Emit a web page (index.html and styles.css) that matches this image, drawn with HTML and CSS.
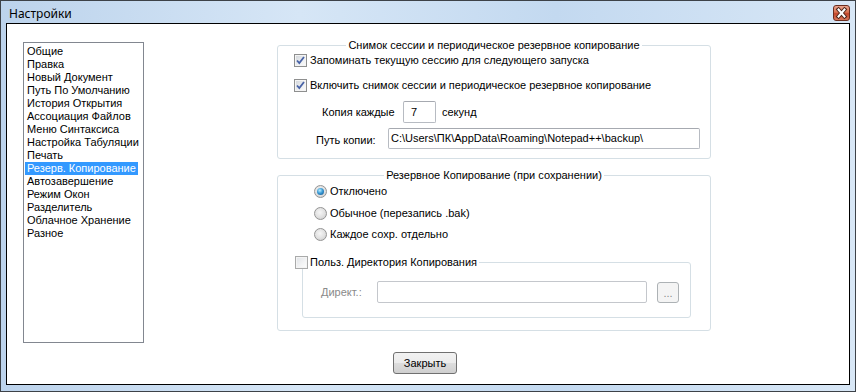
FILE: index.html
```html
<!DOCTYPE html>
<html>

<head>
    <meta charset="utf-8" />
    <title>Настройки</title>
    <link rel="stylesheet" href="styles.css">
</head>

<body>
    <div class="window">
        <div class="titlebar">
            <span class="title">Настройки</span>
            <span class="close-x">
                <svg width="15" height="14" viewBox="0 0 15 14">
                    <path d="M4.5 3.5 L10.5 10.5 M10.5 3.5 L4.5 10.5" stroke="#4a2418" stroke-width="4" stroke-linecap="square" />
                    <path d="M4.5 3.5 L10.5 10.5 M10.5 3.5 L4.5 10.5" stroke="#fff" stroke-width="2" stroke-linecap="square" />
                </svg>
            </span>
        </div>
        <div class="client">
            <div class="main">
                <ul class="cats">
                    <li>Общие</li>
                    <li>Правка</li>
                    <li>Новый Документ</li>
                    <li>Путь По Умолчанию</li>
                    <li>История Открытия</li>
                    <li>Ассоциация Файлов</li>
                    <li>Меню Синтаксиса</li>
                    <li>Настройка Табуляции</li>
                    <li>Печать</li>
                    <li class="selected">Резерв. Копирование</li>
                    <li>Автозавершение</li>
                    <li>Режим Окон</li>
                    <li>Разделитель</li>
                    <li>Облачное Хранение</li>
                    <li>Разное</li>
                </ul>
                <div class="panel">
                    <fieldset class="group session">
                        <legend>Снимок сессии и периодическое резервное копирование</legend>
                        <div class="opt first">
                            <span class="check"><svg width="11" height="11" viewBox="0 0 11 11"><path d="M2 5.5 L4.3 8 L9 2" fill="none" stroke="#4862a6" stroke-width="1.8" /></svg></span>
                            Запоминать текущую сессию для следующего запуска
                        </div>
                        <div class="opt next">
                            <span class="check"><svg width="11" height="11" viewBox="0 0 11 11"><path d="M2 5.5 L4.3 8 L9 2" fill="none" stroke="#4862a6" stroke-width="1.8" /></svg></span>
                            Включить снимок сессии и периодическое резервное копирование
                        </div>
                        <div class="field-row copy-row">
                            <span class="copy-label">Копия каждые</span>
                            <span class="edit seconds">7</span>
                            <span class="unit">секунд</span>
                        </div>
                        <div class="field-row path-row">
                            <span class="path-label">Путь копии:</span>
                            <span class="edit path">C:\Users\ПК\AppData\Roaming\Notepad++\backup\</span>
                        </div>
                    </fieldset>

                    <fieldset class="group backup">
                        <legend>Резервное Копирование (при сохранении)</legend>
                        <div class="opt radio-row first"><span class="radio on"></span>Отключено</div>
                        <div class="opt radio-row second"><span class="radio"></span>Обычное (перезапись .bak)</div>
                        <div class="opt radio-row third"><span class="radio"></span>Каждое сохр. отдельно</div>

                        <fieldset class="subgroup">
                            <legend><span class="check"></span>Польз. Директория Копирования</legend>
                            <div class="field-row dir-row">
                                <span class="dir-label">Директ.:</span>
                                <span class="edit dir"></span>
                                <span class="browse">...</span>
                            </div>
                        </fieldset>
                    </fieldset>
                </div>
            </div>
            <div class="footer">
                <button class="btn">Закрыть</button>
            </div>
        </div>
    </div>
</body>

</html>
```

FILE: styles.css
```css
* {
    box-sizing: border-box;
}

body {
    margin: 0;
    font-family: 'Liberation Sans', Arial, sans-serif;
    font-size: 11px;
    color: #000;
    background: #fff;
}

.window {
    width: 856px;
    height: 392px;
    border: 1px solid #3d4248;
    padding: 0 5px 6px;
    background: linear-gradient(90deg, #bcd3ec 0%, #d6e6f6 35%, #c3d9f0 65%, #d8e7f6 100%);
    display: flex;
    flex-direction: column;
}

.titlebar {
    height: 22px;
    padding: 4px 0 0 3px;
    display: flex;
    justify-content: space-between;
    align-items: flex-start;
}

.title {
    font-family: 'Noto Sans', 'Liberation Sans', sans-serif;
    font-size: 12px;
    line-height: 18px;
}

.close-x {
    width: 17px;
    height: 16px;
    margin-top: 0;
    border: 1px solid #6b2d1f;
    border-radius: 3px;
    background: linear-gradient(#eaa58f 0%, #d8704f 45%, #c2452a 55%, #d9785b 100%);
    display: flex;
    align-items: center;
    justify-content: center;
}

.client {
    height: 362px;
    border: 1px solid #000;
    background: #fff;
    display: flex;
    flex-direction: column;
}

.main {
    display: flex;
    align-items: flex-start;
    padding: 15px 0 0 16px;
}

.cats {
    list-style: none;
    margin: 3px 0 0 0;
    padding: 2px 1px;
    width: 121px;
    height: 301px;
    border: 1px solid #828790;
}

.cats li {
    width: fit-content;
    line-height: 13px;
    padding: 0 2px 0 2px;
    white-space: nowrap;
}

.cats li.selected {
    background: #3399ff;
    color: #fff;
}

.panel {
    margin-left: 133px;
    width: 434px;
}

fieldset {
    margin: 0;
    min-width: 0;
    border: 1px solid #d5dfe5;
    border-radius: 3px;
}

legend {
    line-height: 13px;
    padding: 0 2px;
}

.group {
    padding: 0;
}

.group > legend {
    margin: 0 auto;
}

.session {
    padding-bottom: 9px;
}

.opt {
    display: flex;
    align-items: center;
    gap: 3px;
    line-height: 13px;
    height: 13px;
    white-space: nowrap;
}

.session .opt {
    padding-left: 16px;
}

.session .first {
    margin-top: 2px;
}

.session .next {
    margin-top: 12px;
}

.check {
    width: 13px;
    height: 13px;
    flex: none;
    border: 1px solid #8e8f8f;
    background: linear-gradient(135deg, #cfd3d8 0%, #eef0f2 60%, #fbfbfb 100%);
    box-shadow: inset 0 0 0 1px #f4f4f4;
    display: flex;
}

.subgroup .check {
    border-color: #a9aaaa;
    background: linear-gradient(135deg, #dfe2e6 0%, #f3f4f5 60%, #fdfdfd 100%);
}

.radio {
    width: 13px;
    height: 13px;
    flex: none;
    border-radius: 50%;
    border: 1px solid #949494;
    background: radial-gradient(circle at 45% 40%, #f6f6f6 0%, #e0e0e0 55%, #c6c6c6 100%);
    position: relative;
}

.radio.on::after {
    content: "";
    position: absolute;
    left: 2px;
    top: 2px;
    width: 7px;
    height: 7px;
    border-radius: 50%;
    background: radial-gradient(circle at 40% 35%, #bdeeff 0%, #3a9bd6 45%, #0d4a82 100%);
}

.field-row {
    display: flex;
    align-items: center;
    white-space: nowrap;
}

.edit {
    display: block;
    border: 1px solid #b7bbc2;
    border-top-color: #a6a9b0;
    border-radius: 2px;
    background: #fff;
    padding: 0 2px;
}

.copy-row {
    margin-top: 9px;
    padding-left: 44px;
    height: 22px;
}

.copy-label {
    width: 81px;
}

.seconds {
    width: 33px;
    height: 22px;
    line-height: 20px;
    padding-left: 7px;
}

.unit {
    margin-left: 6px;
}

.path-row {
    margin-top: 5px;
    padding-left: 38px;
    height: 21px;
}

.path-label {
    width: 72px;
    padding-top: 3px;
}

.path {
    width: 312px;
    height: 21px;
    line-height: 19px;
}

.backup {
    margin-top: 10px;
    padding-bottom: 12px;
}

.radio-row {
    padding-left: 36px;
}

.backup .first {
    margin-top: 3px;
}

.backup .second {
    margin-top: 9px;
}

.backup .third {
    margin-top: 8px;
}

.subgroup {
    margin: 15px 19px 0 24px;
    padding: 0 0 14px 0;
}

.subgroup legend {
    margin-left: -8px;
    display: flex;
    align-items: center;
    gap: 2px;
    padding: 0 2px 0 0;
}

.dir-row {
    margin-top: 12px;
    padding-left: 18px;
    height: 22px;
}

.dir-label {
    width: 56px;
    color: #8a8a8a;
}

.dir {
    width: 270px;
    height: 22px;
    border-color: #c4c7cc;
}

.browse {
    width: 22px;
    height: 21px;
    margin-left: 10px;
    border: 1px solid #adb2b5;
    border-radius: 3px;
    background: #f4f4f4;
    color: #8a8a8a;
    text-align: center;
    line-height: 21px;
}

.footer {
    margin-top: 9px;
    padding-left: 386px;
}

.btn {
    width: 64px;
    height: 22px;
    padding: 0;
    font-family: inherit;
    font-size: 11px;
    color: #000;
    border: 1px solid #707070;
    border-radius: 3px;
    background: linear-gradient(#f2f2f2 0%, #ebebeb 50%, #dddddd 50%, #cfcfcf 100%);
}
```
